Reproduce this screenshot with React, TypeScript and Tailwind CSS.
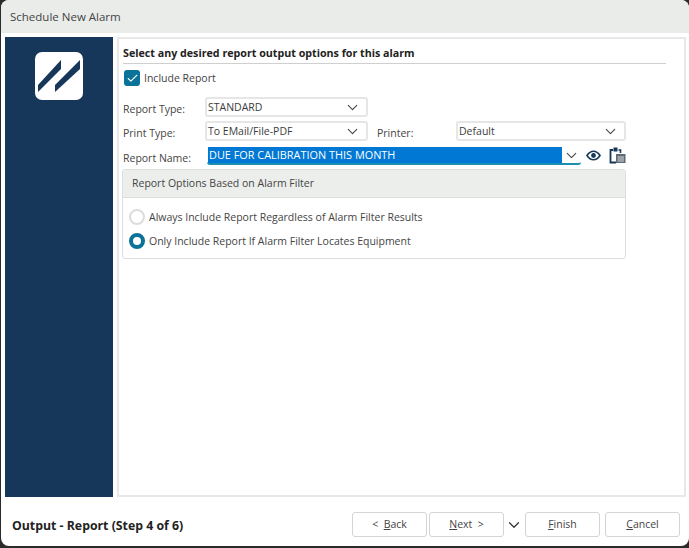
import { ChevronDown, Check } from 'lucide-react';

const FONT = "font-['Open_Sans','Liberation_Sans',sans-serif]";

function Select({ value, className }: { value: string; className: string }) {
  return (
    <div className={`flex h-[20px] items-center justify-between rounded-[3px] border-2 border-[#e6e6e6] bg-white pl-[1px] pr-[5px] ${className}`}>
      <span className="text-[10.5px] leading-none text-[#3c3c3c]">{value}</span>
      <ChevronDown className="h-[17px] w-[17px] text-[#444]" strokeWidth={1.5} />
    </div>
  );
}

function Label({ children, className }: { children: string; className: string }) {
  return <span className={`text-[10.5px] leading-none text-[#444] ${className}`}>{children}</span>;
}

function Logo() {
  return (
    <div className="flex h-[48px] w-[48px] items-center justify-center rounded-[7px] bg-white">
      <svg width="48" height="48" viewBox="0 0 48 48">
        <polygon points="3,33 26,8 26,17 3,40" fill="#16375a" />
        <polygon points="20,33 45,8 45,17 20,40" fill="#16375a" />
      </svg>
    </div>
  );
}

function EyeIcon() {
  return (
    <svg width="15" height="15" viewBox="0 0 15 15" fill="none">
      <path d="M1 7.5C3 4.4 5 3.2 7.5 3.2S12 4.4 14 7.5C12 10.6 10 11.8 7.5 11.8S3 10.6 1 7.5Z" stroke="#16375a" strokeWidth="1.6" />
      <circle cx="7.5" cy="7.5" r="2.4" fill="#16375a" />
    </svg>
  );
}

function ClipboardIcon() {
  return (
    <svg width="17" height="17" viewBox="0 0 17 17" fill="none">
      <path d="M4 3H1.5V15.5H7" stroke="#16375a" strokeWidth="1.8" />
      <path d="M9.5 3H11.5V6" stroke="#16375a" strokeWidth="1.6" />
      <rect x="4.5" y="0.5" width="4" height="4" fill="#16375a" />
      <rect x="7" y="7" width="9.5" height="9" fill="#5d6a75" />
      <path d="M8.5 10H15M8.5 12H15M8.5 14H15" stroke="#e8e8e8" strokeWidth="0.9" />
    </svg>
  );
}

function Radio({ on, label }: { on?: boolean; label: string }) {
  return (
    <div className="flex items-center gap-[4px]">
      {on ? (
        <span className="h-[16px] w-[16px] rounded-full border-[4.5px] border-[#0b7299] bg-white" />
      ) : (
        <span className="h-[16px] w-[16px] rounded-full border-2 border-[#dcdcdc] bg-white" />
      )}
      <span className="text-[10.5px] leading-none text-[#444]">{label}</span>
    </div>
  );
}

function FooterButton({ children, className }: { children: React.ReactNode; className: string }) {
  return (
    <button className={`flex h-[25px] items-center justify-center rounded-[3px] border border-[#d4d4d4] bg-white text-[10.5px] text-[#444] ${className}`}>
      {children}
    </button>
  );
}

export default function App() {
  return (
    <div className={`h-[548px] w-[689px] overflow-hidden bg-[#2b2b2b] ${FONT}`}>
      <div className="ml-[1px] flex h-[546px] w-[688px] flex-col rounded-lg bg-white">
        <div className="flex h-[33px] shrink-0 items-center rounded-t-lg bg-[#eaecea] pl-[9px]">
          <span className="text-[11.5px] leading-none text-[#444]">Schedule New Alarm</span>
        </div>

        <div className="mt-[4px] flex h-[460px] shrink-0 gap-[4px] pl-[4px] pr-[3px]">
          <div className="flex w-[108px] shrink-0 justify-center bg-[#16375a] pt-[15px]">
            <Logo />
          </div>

          <div className="flex-1 border-2 border-[#e8e8e8] bg-white pl-[4px] pt-[7px]">
            <div className="w-[543px] border-b border-[#cfcfcf] pb-[3px] text-[10.7px] font-bold leading-[14px] text-[#222]">
              Select any desired report output options for this alarm
            </div>

            <div className="mt-[6px] flex items-center gap-[4px] pl-[1px]">
              <span className="flex h-[16px] w-[16px] items-center justify-center rounded-[3px] bg-[#0b7299]">
                <Check className="h-[13px] w-[13px] text-white" strokeWidth={2} />
              </span>
              <span className="text-[10.5px] leading-none text-[#444]">Include Report</span>
            </div>

            <div className="mt-[11px] flex flex-col gap-[4px]">
              <div className="flex items-center">
                <Label className="w-[82px] pt-[5px]">Report Type:</Label>
                <Select value="STANDARD" className="w-[163px]" />
              </div>
              <div className="flex items-center">
                <Label className="w-[82px] pt-[5px]">Print Type:</Label>
                <Select value="To EMail/File-PDF" className="w-[163px]" />
                <Label className="ml-[9px] w-[79px] pt-[5px]">Printer:</Label>
                <Select value="Default" className="w-[170px]" />
              </div>
              <div className="flex items-center">
                <Label className="w-[84px] pt-[6px]">Report Name:</Label>
                <div className="flex h-[20px] w-[374px] items-stretch rounded-[3px] border-b-2 border-[#1a8fb0] bg-white pl-[1px] pt-[2px]">
                  <div className="flex flex-1 items-center bg-[#0078d4] pl-[1px]">
                    <span className="text-[10.9px] leading-none text-white">DUE FOR CALIBRATION THIS MONTH</span>
                  </div>
                  <div className="flex w-[19px] items-center justify-center">
                    <ChevronDown className="h-[17px] w-[17px] text-[#444]" strokeWidth={1.5} />
                  </div>
                </div>
                <span className="ml-[5px]"><EyeIcon /></span>
                <span className="ml-[8px]"><ClipboardIcon /></span>
              </div>
            </div>

            <div className="-ml-[1px] mt-[4px] h-[90px] w-[504px] overflow-hidden rounded-[3px] border border-[#dedede]">
              <div className="flex h-[28px] items-center border-b border-[#dedede] bg-[#eceeec] pl-[9px]">
                <span className="text-[10.5px] leading-none text-[#444]">Report Options Based on Alarm Filter</span>
              </div>
              <div className="flex flex-col gap-[8px] pl-[6px] pt-[11px]">
                <Radio label="Always Include Report Regardless of Alarm Filter Results" />
                <Radio on label="Only Include Report If Alarm Filter Locates Equipment" />
              </div>
            </div>
          </div>
        </div>

        <div className="flex flex-1 items-center pl-[11px] pr-[9px]">
          <span className="flex-1 pt-[9px] text-[12.3px] font-bold leading-none text-[#222]">Output - Report (Step 4 of 6)</span>
          <div className="flex items-center pt-[6px]">
            <FooterButton className="w-[75px]">
              &lt;&nbsp;&nbsp;<span className="underline">B</span>ack
            </FooterButton>
            <FooterButton className="ml-[2px] w-[75px]">
              <span className="underline">N</span>ext&nbsp;&nbsp;&gt;
            </FooterButton>
            <ChevronDown className="ml-[1px] mr-[2px] h-[18px] w-[18px] text-[#333]" strokeWidth={1.6} />
            <FooterButton className="w-[75px]">
              <span className="underline">F</span>inish
            </FooterButton>
            <FooterButton className="ml-[5px] w-[75px]">
              <span className="underline">C</span>ancel
            </FooterButton>
          </div>
        </div>
      </div>
    </div>
  );
}
